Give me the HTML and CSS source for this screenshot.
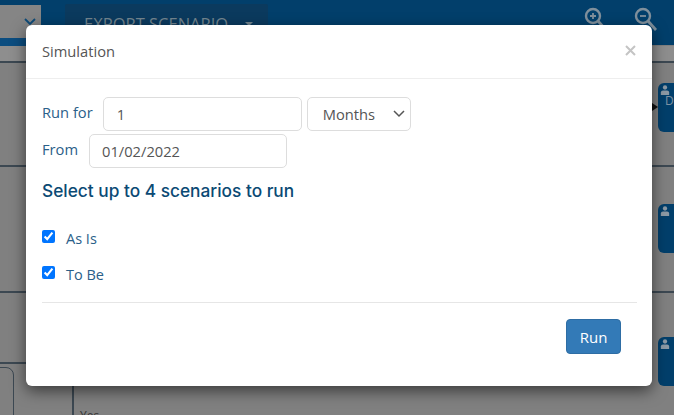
FILE: index.html
```html
<!DOCTYPE html>
<html lang="en">
<head>
<meta charset="utf-8">
<title>Simulation</title>
<link rel="stylesheet" href="styles.css">
</head>
<body>
<div class="canvas">
  <header class="topbar">
    <div class="view-select">
      <svg class="view-chevron" width="12" height="8" viewBox="0 0 12 8"><path d="M1 1l5 5 5-5" fill="none" stroke="#0d4a78" stroke-width="1.800"/></svg>
    </div>
    <div class="export">EXPORT SCENARIO <span class="caret"></span></div>
    <div class="zooms">
      <svg width="24" height="26" viewBox="0 0 24 26"><circle cx="10" cy="10" r="7" fill="none" stroke="#80909c" stroke-width="2.400"/><path d="M15 15l8 9" stroke="#80909c" stroke-width="2.800"/><path d="M7 10h6M10 7v6" stroke="#80909c" stroke-width="1.800"/></svg>
      <svg width="24" height="26" viewBox="0 0 24 26"><circle cx="10" cy="10" r="7" fill="none" stroke="#80909c" stroke-width="2.400"/><path d="M15 15l8 9" stroke="#80909c" stroke-width="2.800"/><path d="M7 10h6" stroke="#80909c" stroke-width="1.800"/></svg>
    </div>
  </header>
  <div class="strip"></div>

  <div class="lane-line lane-a"></div>
  <div class="lane-line lane-b"></div>
  <div class="lane-line lane-c"></div>
  <div class="lane-line lane-d"></div>
  <div class="outline"></div>
  <div class="vline"></div>
  <div class="yes">Yes</div>

  <div class="arrow"></div>
  <div class="node node-a">
    <svg class="person" width="10" height="10" viewBox="0 0 12 12"><circle cx="6" cy="3" r="2.600"/><path d="M1 12V9q0-2.500 2.500-2.500h5Q11 6.500 11 9v3z"/></svg>
    <span class="node-text">D</span>
  </div>
  <div class="node node-b">
    <svg class="person" width="10" height="10" viewBox="0 0 12 12"><circle cx="6" cy="3" r="2.600"/><path d="M1 12V9q0-2.500 2.500-2.500h5Q11 6.500 11 9v3z"/></svg>
  </div>
  <div class="node node-c">
    <svg class="person" width="10" height="10" viewBox="0 0 12 12"><circle cx="6" cy="3" r="2.600"/><path d="M1 12V9q0-2.500 2.500-2.500h5Q11 6.500 11 9v3z"/></svg>
  </div>

  <section class="modal">
    <div class="modal-header">
      <h1 class="modal-title">Simulation</h1>
      <svg class="close" width="11" height="11" viewBox="0 0 11 11"><path d="M1 1l9 9M10 1l-9 9" stroke="#c4c4c4" stroke-width="2"/></svg>
    </div>
    <div class="modal-body">
      <div class="row row-run">
        <label class="field-label">Run for</label>
        <input class="control input-run" type="text" value="1">
        <div class="select-wrap">
          <select class="control select-unit"><option>Months</option></select>
          <svg class="select-chevron" width="12" height="8" viewBox="0 0 12 8"><path d="M1 1l5 5 5-5" fill="none" stroke="#555" stroke-width="1.500"/></svg>
        </div>
      </div>
      <div class="row row-from">
        <label class="field-label">From</label>
        <input class="control input-from" type="text" value="01/02/2022">
      </div>
      <h2 class="section-title">Select up to 4 scenarios to run</h2>
      <label class="check check-first"><input type="checkbox" checked><span>As Is</span></label>
      <label class="check"><input type="checkbox" checked><span>To Be</span></label>
      <hr class="divider">
      <div class="actions"><button class="run" type="button">Run</button></div>
    </div>
  </section>
</div>
</body>
</html>
```

FILE: styles.css
```css
* { box-sizing: border-box; }
html, body { margin: 0; height: 100%; }
body { font-family: "Open Sans", "Liberation Sans", sans-serif; background: #808080; overflow: hidden; }

.canvas { position: relative; width: 674px; height: 415px; overflow: hidden; background: #808080; }

.topbar { display: flex; height: 45px; background: #023f6b; position: relative; }
.view-select { width: 41px; height: 33px; margin-top: 5px; background: #858585; position: relative; }
.view-chevron { position: absolute; left: 24px; top: 13px; }
.export {
  display: flex; align-items: flex-start;
  margin: 4px 0 0 24px; width: 203px; height: 41px; padding: 8px 0 0 19px;
  background: #0b3a5e; color: #73858f; font-size: 16.500px; white-space: nowrap; border-radius: 2px;
}
.caret {
  margin: 10px 0 0 17px;
  border-left: 4px solid transparent; border-right: 4px solid transparent; border-top: 4px solid #73858f;
}
.zooms { display: flex; gap: 26px; margin: 6px 0 0 315px; }

.strip { position: absolute; left: 0; top: 38px; width: 41px; height: 8px; background: #0b4d80; }
.lane-line { position: absolute; left: 0; width: 100%; height: 1.500px; background: #3c4852; }
.lane-a { top: 61px; }
.lane-b { top: 165px; }
.lane-c { top: 291px; }
.lane-d { top: 362px; width: 30px; }
.canvas::before { content: ""; position: absolute; left: 0; top: 46px; width: 100%; height: 15px; background: #8e8e8e; }
.outline { position: absolute; left: -20px; top: 367px; width: 34px; height: 80px; border: 1.500px solid #3c4852; border-radius: 8px; }
.vline { position: absolute; left: 72px; top: 380px; width: 1.500px; height: 40px; background: #3c4852; }
.yes { position: absolute; left: 80px; top: 408px; font-size: 12px; line-height: 16px; color: #333; }

.arrow { position: absolute; left: 652px; top: 103px; border-left: 6px solid #111; border-top: 4px solid transparent; border-bottom: 4px solid transparent; }
.node { position: absolute; left: 658px; width: 30px; background: #023f6b; border-radius: 6px; }
.node-a { top: 83px; height: 49px; }
.node-b { top: 204px; height: 49px; }
.node-c { top: 337px; height: 49px; }
.person { position: absolute; left: 2px; top: 2px; fill: #8d9aa5; }
.node-text { position: absolute; left: 7px; top: 10px; color: #7f93a3; font-size: 12px; line-height: 16px; }

.modal {
  position: absolute; left: 26px; top: 25px; width: 626px; height: 361px;
  background: #fff; border-radius: 6px; box-shadow: 0 5px 15px rgba(0, 0, 0, .55);
}
.modal-header { display: flex; align-items: center; justify-content: space-between; height: 54px; padding: 0 16px 2px; border-bottom: 1px solid #eee; }
.modal-title { margin: 0; font-size: 14.700px; font-weight: 400; color: #555; }
.modal-body { padding: 18px 15px 0 16px; }

.row { display: flex; align-items: center; }
.row-run { height: 34px; }
.row-from { height: 34px; margin-top: 3px; }
.field-label { font-size: 14.700px; color: #2b6089; position: relative; top: -2px; }
.control {
  height: 34px; border: 1px solid #ddd; border-radius: 5px; background: #fff; color: #555;
  font-family: inherit; font-size: 14.700px; outline: none;
}
.input-run { width: 199px; margin-left: 10px; padding: 0 13px; }
.input-from { width: 198px; margin-left: 11px; padding: 0 12px; }
.select-wrap { position: relative; margin-left: 5px; }
.select-unit { display: block; width: 104px; padding: 0 0 0 15px; appearance: none; }
.select-chevron { position: absolute; right: 6px; top: 13px; pointer-events: none; }

.section-title { margin: 13px 0 0; font-family: "Inter", sans-serif; font-size: 17.300px; line-height: 20px; font-weight: 500; color: #0b4a74; }
.check { display: flex; align-items: center; font-size: 14.500px; color: #2b6089; height: 20px; margin-top: 16px; }
.check-first { margin-top: 27px; }
.check input { width: 13px; height: 13px; margin: 0 11px 3px 0; }
.divider { border: 0; border-top: 1px solid #e6e6e6; margin: 18px 0 0; }
.actions { display: flex; justify-content: flex-end; padding: 16px 16px 0 0; }
.run { width: 55px; height: 35px; border: 1px solid #2e6da4; border-radius: 4px; background: #337ab7; color: #fff; font-family: inherit; font-size: 15px; font-weight: 500; padding: 0; }
```
